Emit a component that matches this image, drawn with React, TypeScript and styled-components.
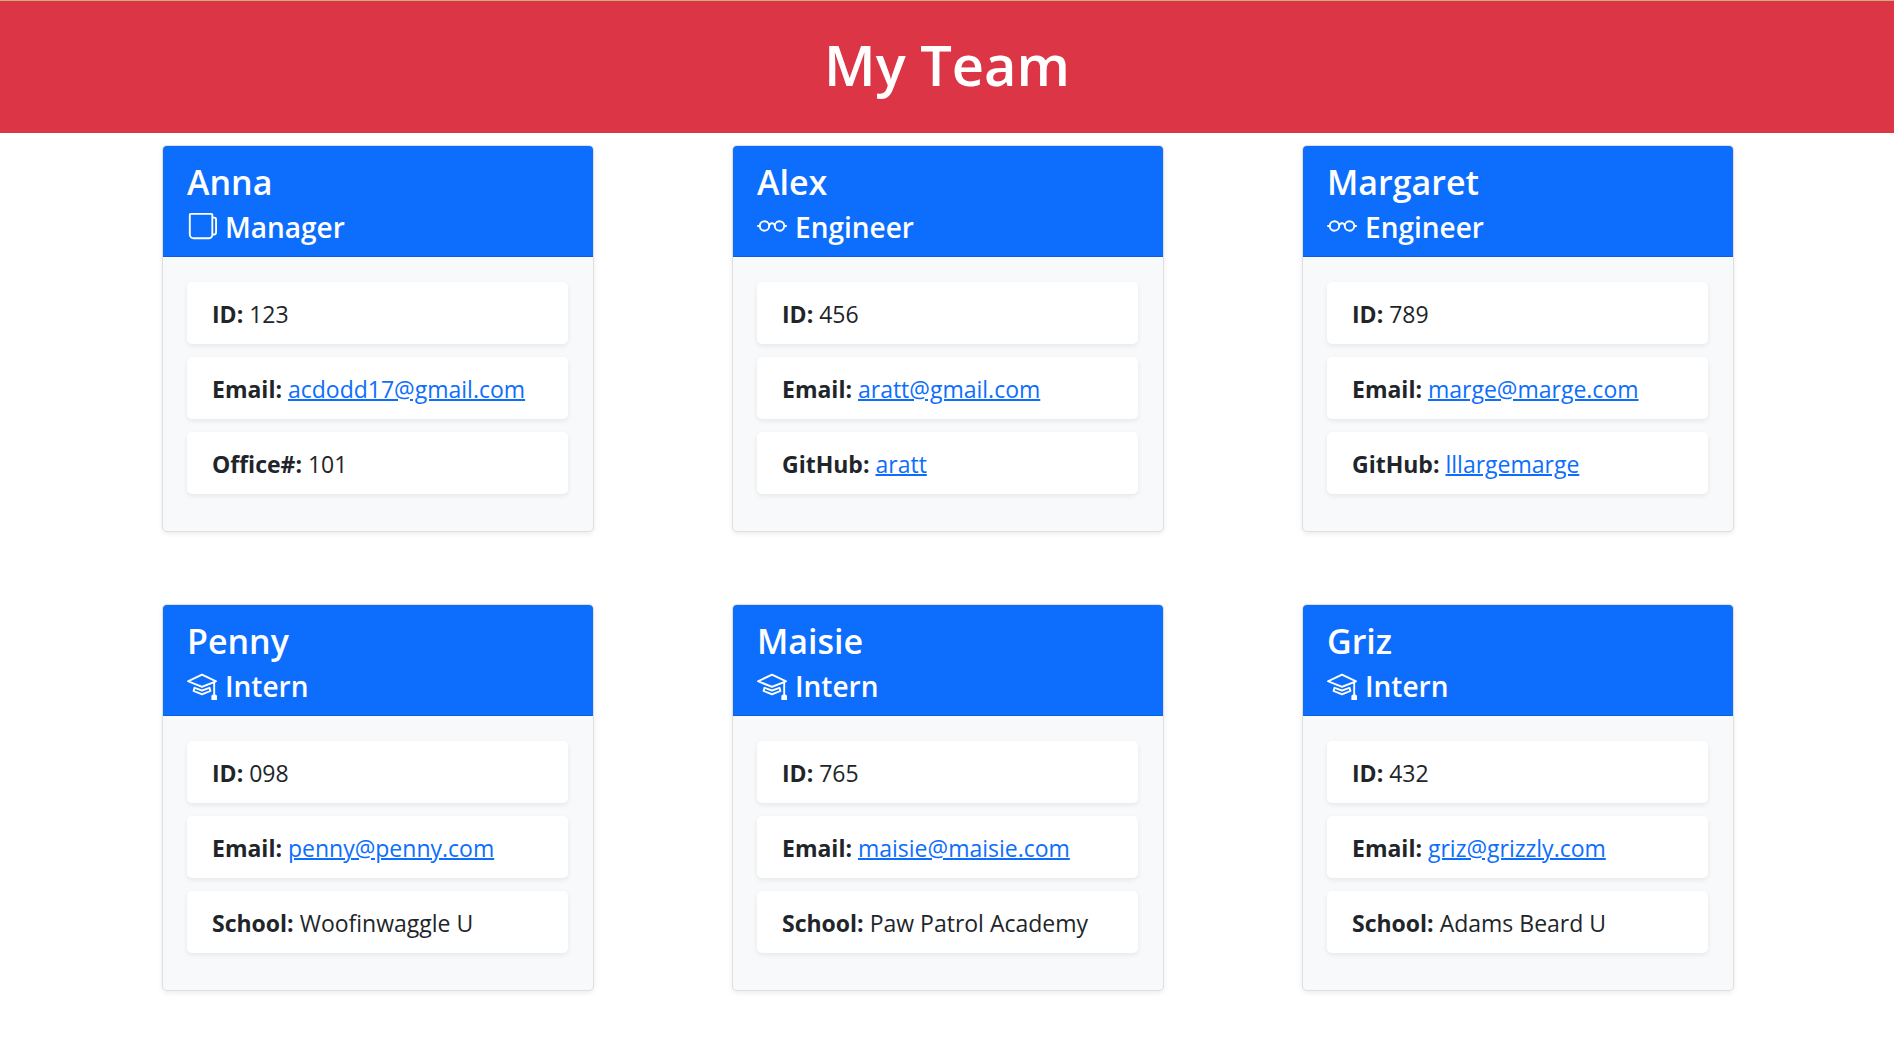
import React from "react";
import styled, { createGlobalStyle } from "styled-components";
import { BsEyeglasses, BsMortarboard } from "react-icons/bs";

const GlobalStyle = createGlobalStyle`
  *, *::before, *::after { box-sizing: border-box; }
  body {
    margin: 0;
    background: #fff;
    color: #212529;
    font-family: "Segoe UI", "Open Sans", "Noto Sans", sans-serif;
    font-size: 23px;
    line-height: 36px;
  }
`;

const Banner = styled.header`
  padding: 27px 20px 33px;
  border-top: 1px solid #d1ab7c;
  background: #dc3545;
  color: #fff;
  text-align: center;
`;

const Title = styled.h1`
  margin: 0;
  font-size: 56px;
  font-weight: 600;
  line-height: 72px;
`;

const Team = styled.main`
  display: grid;
  grid-template-columns: repeat(3, minmax(0, 1fr));
  justify-items: center;
  row-gap: 72px;
  padding: 12px 91px 72px 93px;
`;

const Card = styled.article`
  width: 100%;
  max-width: 432px;
  border: 1px solid #dfdfdf;
  border-radius: 5px;
  background: #f8f9fa;
  box-shadow: 0 2px 5px rgba(0, 0, 0, 0.075);
  overflow: hidden;
`;

const CardHeader = styled.div`
  padding: 12px 24px 8px;
  border-bottom: 1px solid #0c5fdd;
  background: #0d6efd;
  color: #fff;
`;

const Name = styled.h2`
  margin: 0;
  font-size: 34px;
  font-weight: 600;
  line-height: 48px;
`;

const Role = styled.h3`
  display: flex;
  align-items: center;
  gap: 8px;
  margin: 0;
  font-size: 28px;
  font-weight: 600;
  line-height: 42px;

  svg {
    flex: none;
    width: 30px;
    height: 30px;
    margin-bottom: 2px;
  }
`;

const Facts = styled.ul`
  display: grid;
  gap: 13px;
  margin: 0;
  padding: 25px 25px 37px 24px;
  list-style: none;
`;

const Fact = styled.li`
  padding: 14px 25px 12px;
  border-radius: 5px;
  background: #fff;
  box-shadow: 0 2px 5px rgba(0, 0, 0, 0.075);
  font-weight: 400;
`;

const Label = styled.strong`
  font-weight: 700;
`;

const Link = styled.a`
  color: #0d6efd;
  text-decoration: underline;
  text-decoration-thickness: 2px;
`;

function MugIcon(props: React.SVGProps<SVGSVGElement>) {
  return (
    <svg viewBox="0 0 16 16" fill="currentColor" {...props}>
      <path d="M1 2a1 1 0 0 1 1-1h11a1 1 0 0 1 1 1v1h.5A1.5 1.5 0 0 1 16 4.5v7a1.5 1.5 0 0 1-1.5 1.5h-.55a2.5 2.5 0 0 1-2.45 2h-8A2.5 2.5 0 0 1 1 12.5V2zm13 10h.5a.5.5 0 0 0 .5-.5v-7a.5.5 0 0 0-.5-.5H14v8zM13 2H2v10.5A1.5 1.5 0 0 0 3.5 14h8a1.5 1.5 0 0 0 1.5-1.5V2z" />
    </svg>
  );
}

type RoleName = "Manager" | "Engineer" | "Intern";

interface Member {
  name: string;
  role: RoleName;
  id: string;
  email: string;
  label: string;
  value: string;
}

const icons = {
  Manager: MugIcon,
  Engineer: BsEyeglasses,
  Intern: BsMortarboard,
};

const members: Member[] = [
  { name: "Anna", role: "Manager", id: "123", email: "acdodd17@gmail.com", label: "Office#", value: "101" },
  { name: "Alex", role: "Engineer", id: "456", email: "aratt@gmail.com", label: "GitHub", value: "aratt" },
  { name: "Margaret", role: "Engineer", id: "789", email: "marge@marge.com", label: "GitHub", value: "lllargemarge" },
  { name: "Penny", role: "Intern", id: "098", email: "penny@penny.com", label: "School", value: "Woofinwaggle U" },
  { name: "Maisie", role: "Intern", id: "765", email: "maisie@maisie.com", label: "School", value: "Paw Patrol Academy" },
  { name: "Griz", role: "Intern", id: "432", email: "griz@grizzly.com", label: "School", value: "Adams Beard U" },
];

function MemberCard({ member }: { member: Member }) {
  const Icon = icons[member.role];
  return (
    <Card>
      <CardHeader>
        <Name>{member.name}</Name>
        <Role>
          <Icon aria-hidden="true" />
          {member.role}
        </Role>
      </CardHeader>
      <Facts>
        <Fact>
          <Label>ID:</Label> {member.id}
        </Fact>
        <Fact>
          <Label>Email:</Label> <Link href={`mailto:${member.email}`}>{member.email}</Link>
        </Fact>
        <Fact>
          <Label>{member.label}:</Label>{" "}
          {member.role === "Engineer" ? (
            <Link href={`https://github.com/${member.value}`}>{member.value}</Link>
          ) : (
            member.value
          )}
        </Fact>
      </Facts>
    </Card>
  );
}

export default function App() {
  return (
    <>
      <GlobalStyle />
      <Banner>
        <Title>My Team</Title>
      </Banner>
      <Team>
        {members.map((member) => (
          <MemberCard key={member.name} member={member} />
        ))}
      </Team>
    </>
  );
}
